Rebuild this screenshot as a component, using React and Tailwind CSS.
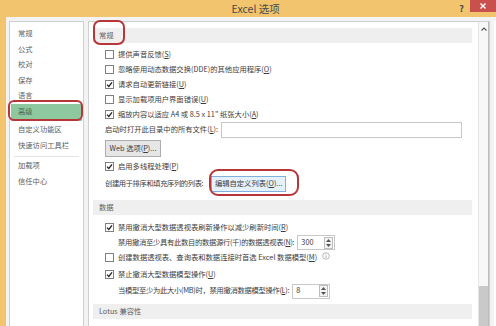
import React from "react";

function Box({ checked }) {
  return (
    <span className="w-[9px] h-[9px] border border-[#808080] bg-white flex items-center justify-center shrink-0">
      {checked && (
        <svg width="7" height="7" viewBox="0 0 7 7">
          <path d="M1 3.6 L2.8 5.4 L6 1.3" fill="none" stroke="#222" strokeWidth="1.3" />
        </svg>
      )}
    </span>
  );
}

function Check({ checked, children, extra }) {
  return (
    <div className="h-[15px] flex items-center pl-[12px] gap-[4px]">
      <Box checked={checked} />
      <span>{children}</span>
      {extra}
    </div>
  );
}

function Header({ children }) {
  return (
    <div className="h-[15px] bg-[#efefef] flex items-center pl-[6px] text-[#606060] mr-[6px]">
      {children}
    </div>
  );
}

function Spin({ value, width }) {
  return (
    <div className={`h-[15px] ${width} border border-[#c8c8c8] bg-white flex items-center justify-between pl-[3px] pr-[1px]`}>
      <span>{value}</span>
      <div className="w-[9px] h-[12px] border border-[#bdbdbd] bg-[#f4f4f4] flex flex-col items-center justify-around">
        <svg width="5" height="3" viewBox="0 0 5 3"><path d="M0 3 L2.5 0 L5 3Z" fill="#555" /></svg>
        <svg width="5" height="3" viewBox="0 0 5 3"><path d="M0 0 L2.5 3 L5 0Z" fill="#555" /></svg>
      </div>
    </div>
  );
}

export default function App() {
  const nav = ["常规", "公式", "校对", "保存", "语言"];
  return (
    <div className="w-[496px] h-[326px] overflow-hidden flex flex-col bg-[#f2c46e] font-['Microsoft_YaHei','Noto_Sans_CJK_SC',sans-serif] text-[7.3px] text-[#3c3c3c] leading-none">
      {/* 标题栏 */}
      <div className="h-[17px] shrink-0 flex items-center relative">
        <div className="flex-1 text-center text-[10.5px] text-[#4a4a4a] pl-[52px] pt-[1px]">Excel 选项</div>
        <span className="text-[9px] text-[#444] font-bold mr-[6px]">?</span>
        <div className="w-[26px] h-[12px] self-start bg-[#c9504d] flex items-center justify-center">
          <svg width="6" height="6" viewBox="0 0 6 6">
            <path d="M0.5 0.5 L5.5 5.5 M5.5 0.5 L0.5 5.5" stroke="#fff" strokeWidth="1.4" />
          </svg>
        </div>
      </div>

      <div className="flex-1 flex ml-[6px] bg-[#f3f3f3] pt-[4px] pl-[3px] gap-[4px] min-h-0">
        {/* 左侧导航 */}
        <div className="w-[75px] shrink-0 bg-white border border-[#cfcfcf] border-b-0 pt-[4px] text-[#606060] relative">
          {nav.map((n) => (
            <div key={n} className="h-[15.5px] flex items-center pl-[8px]">{n}</div>
          ))}
          <div className="h-[17px] mx-[1px] bg-[#8ec89f] flex items-center pl-[7px] text-[#4d6b55]">高级</div>
          <div className="h-[16px] flex items-center pl-[8px] mt-[1px]">自定义功能区</div>
          <div className="h-[16px] flex items-center pl-[8px]">快速访问工具栏</div>
          <div className="h-px bg-[#e3e3e3] mx-[4px] my-[2px]" />
          <div className="h-[15px] flex items-center pl-[8px]">加载项</div>
          <div className="h-[16px] flex items-center pl-[8px]">信任中心</div>
          <div className="absolute left-[-2px] top-[78px] w-[75px] h-[21px] border-2 border-[#b8353a] rounded-[6px]" />
        </div>

        {/* 右侧内容 */}
        <div className="flex-1 flex bg-white border border-[#cfcfcf] border-b-0 relative">
          <div className="flex-1 pl-[4px] pt-[6px]">
            <Header>常规</Header>
            <div className="mt-[4px]">
              <Check>提供声音反馈(<u>S</u>)</Check>
              <Check>忽略使用动态数据交换(DDE)的其他应用程序(<u>O</u>)</Check>
              <Check checked>请求自动更新链接(<u>U</u>)</Check>
              <Check>显示加载项用户界面错误(<u>U</u>)</Check>
              <Check checked>缩放内容以适应 A4 或 8.5 x 11" 纸张大小(<u>A</u>)</Check>
            </div>
            <div className="h-[16px] flex items-center pl-[12px]">
              <span>启动时打开此目录中的所有文件(<u>L</u>):</span>
              <div className="ml-[3px] w-[241px] h-[16px] border border-[#c8c8c8] bg-white" />
            </div>
            <div className="mt-[2px] pl-[12px]">
              <div className="w-[56px] h-[17px] border border-[#adadad] bg-[#e6e6e6] flex items-center justify-center">Web 选项(<u>P</u>)...</div>
            </div>
            <div className="mt-[2px]">
              <Check checked>启用多线程处理(<u>P</u>)</Check>
            </div>
            <div className="h-[16px] mt-[2px] flex items-center pl-[12px]">
              <span className="tracking-[-0.4px]">创建用于排序和填充序列的列表:</span>
              <div className="ml-[8px] w-[75px] h-[16px] border border-[#7fb0e2] bg-[#e5f1fb] flex items-center justify-center">编辑自定义列表(<u>O</u>)...</div>
            </div>
            <div className="mt-[8px]">
              <Header>数据</Header>
            </div>
            <div className="mt-[5px]">
              <Check checked>禁用撤消大型数据透视表刷新操作以减少刷新时间(<u>R</u>)</Check>
            </div>
            <div className="h-[15px] flex items-center pl-[25px]">
              <span className="tracking-[-0.3px]">禁用撤消至少具有此数目的数据源行(千)的数据透视表(<u>N</u>):</span>
              <div className="ml-[3px]"><Spin value="300" width="w-[38px]" /></div>
            </div>
            <Check
              extra={
                <svg width="8" height="8" viewBox="0 0 8 8" className="ml-[1px] -mt-[3px]">
                  <circle cx="4" cy="4" r="3.3" fill="none" stroke="#9a9a9a" strokeWidth="0.7" />
                  <path d="M4 3.4 V6 M4 2 V2.6" stroke="#9a9a9a" strokeWidth="0.8" />
                </svg>
              }
            >
              创建数据透视表、查询表和数据连接时首选 Excel 数据模型(<u>M</u>)
            </Check>
            <div className="mt-[2px]">
              <Check checked>禁止撤消大型数据模型操作(<u>U</u>)</Check>
            </div>
            <div className="h-[16px] mt-[1px] flex items-center pl-[25px]">
              <span className="tracking-[-0.3px]">当模型至少为此大小(MB)时，禁用撤消数据模型操作(<u>L</u>):</span>
              <div className="ml-[3px]"><Spin value="8" width="w-[38px]" /></div>
            </div>
            <div className="mt-[5px]">
              <Header>Lotus 兼容性</Header>
            </div>
          </div>

          {/* 滚动条 */}
          <div className="w-[11px] shrink-0 border-l border-[#e6e6e6] border-r border-r-[#bcbcbc] bg-[#f7f7f7] flex flex-col items-center">
            <svg width="6" height="4" viewBox="0 0 6 4" className="mt-[5px]">
              <path d="M0.5 3.5 L3 1 L5.5 3.5" fill="none" stroke="#555" strokeWidth="1.1" />
            </svg>
            <div className="flex-1" />
            <div className="w-[9px] h-[40px] bg-[#c9c9c9]" />
          </div>

          <div className="absolute left-[4px] top-[-2px] w-[32px] h-[25px] border-2 border-[#b8353a] rounded-[7px]" />
          <div className="absolute left-[120px] top-[147px] w-[90px] h-[27px] border-2 border-[#b8353a] rounded-[9px]" />
        </div>
        <div className="w-[2px] shrink-0 bg-white" />
      </div>
    </div>
  );
}
